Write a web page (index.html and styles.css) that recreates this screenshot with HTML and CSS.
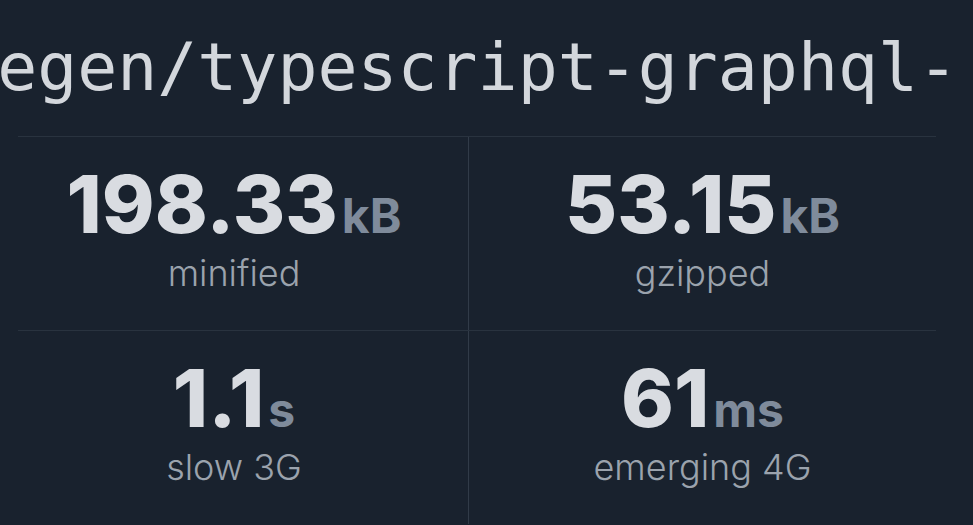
FILE: index.html
```html
<!DOCTYPE html>
<html lang="en">
<head>
  <meta charset="UTF-8">
  <meta name="viewport" content="width=device-width, initial-scale=1.0">
  <title>Bundle size</title>
  <link rel="stylesheet" href="styles.css">
</head>
<body>
  <div class="result-page">
    <h1 class="package-name">@graphql-codegen/typescript-graphql-request</h1>

    <div class="stats">
      <hr class="divider">
      <div class="stat-row">
        <div class="stat">
          <div class="stat-value">198.33<span class="stat-unit">kB</span></div>
          <div class="stat-label">minified</div>
        </div>
        <div class="stat">
          <div class="stat-value">53.15<span class="stat-unit">kB</span></div>
          <div class="stat-label">gzipped</div>
        </div>
      </div>
      <hr class="divider">
      <div class="stat-row">
        <div class="stat">
          <div class="stat-value">1.1<span class="stat-unit">s</span></div>
          <div class="stat-label">slow 3G</div>
        </div>
        <div class="stat">
          <div class="stat-value">61<span class="stat-unit">ms</span></div>
          <div class="stat-label">emerging 4G</div>
        </div>
      </div>
    </div>
  </div>
</body>
</html>
```

FILE: styles.css
```css
body {
  margin: 0;
  background-color: #19222e;
  color: #d9dce1;
  font-family: Inter, "Noto Sans", sans-serif;
  overflow: hidden;
}

.result-page {
  height: 100vh;
}

/* long names overflow and get clipped */
.package-name {
  display: flex;
  justify-content: center;
  margin: 0 13px 29px 0;
  padding: 27px 205px 0 0;
  overflow: hidden;
  font-family: "DejaVu Sans Mono", monospace;
  font-size: 66.5px;
  font-weight: 300;
  line-height: 80px;
  white-space: nowrap;
  color: #d3d7dc;
}

.stats {
  width: 936px;
}

.divider {
  margin: 0 0 0 18px;
  border: 0;
  border-top: 1px solid #29333f;
}

.stat-row {
  display: grid;
  grid-template-columns: 468px 1fr;
}

.stat {
  padding: 27px 0 37px;
  text-align: center;
}

.stat + .stat {
  border-left: 1px solid #313b48;
}

.stat-value {
  font-size: 80px;
  font-weight: 800;
  line-height: 80px;
  letter-spacing: 0;
}

.stat-unit {
  margin-left: 4px;
  font-size: 48px;
  font-weight: 700;
  line-height: 1;
  color: #7f8b9b;
}

.stat-label {
  margin-top: 9px;
  font-size: 36px;
  font-weight: 300;
  line-height: 40px;
  color: #9ba3ad;
}
```
